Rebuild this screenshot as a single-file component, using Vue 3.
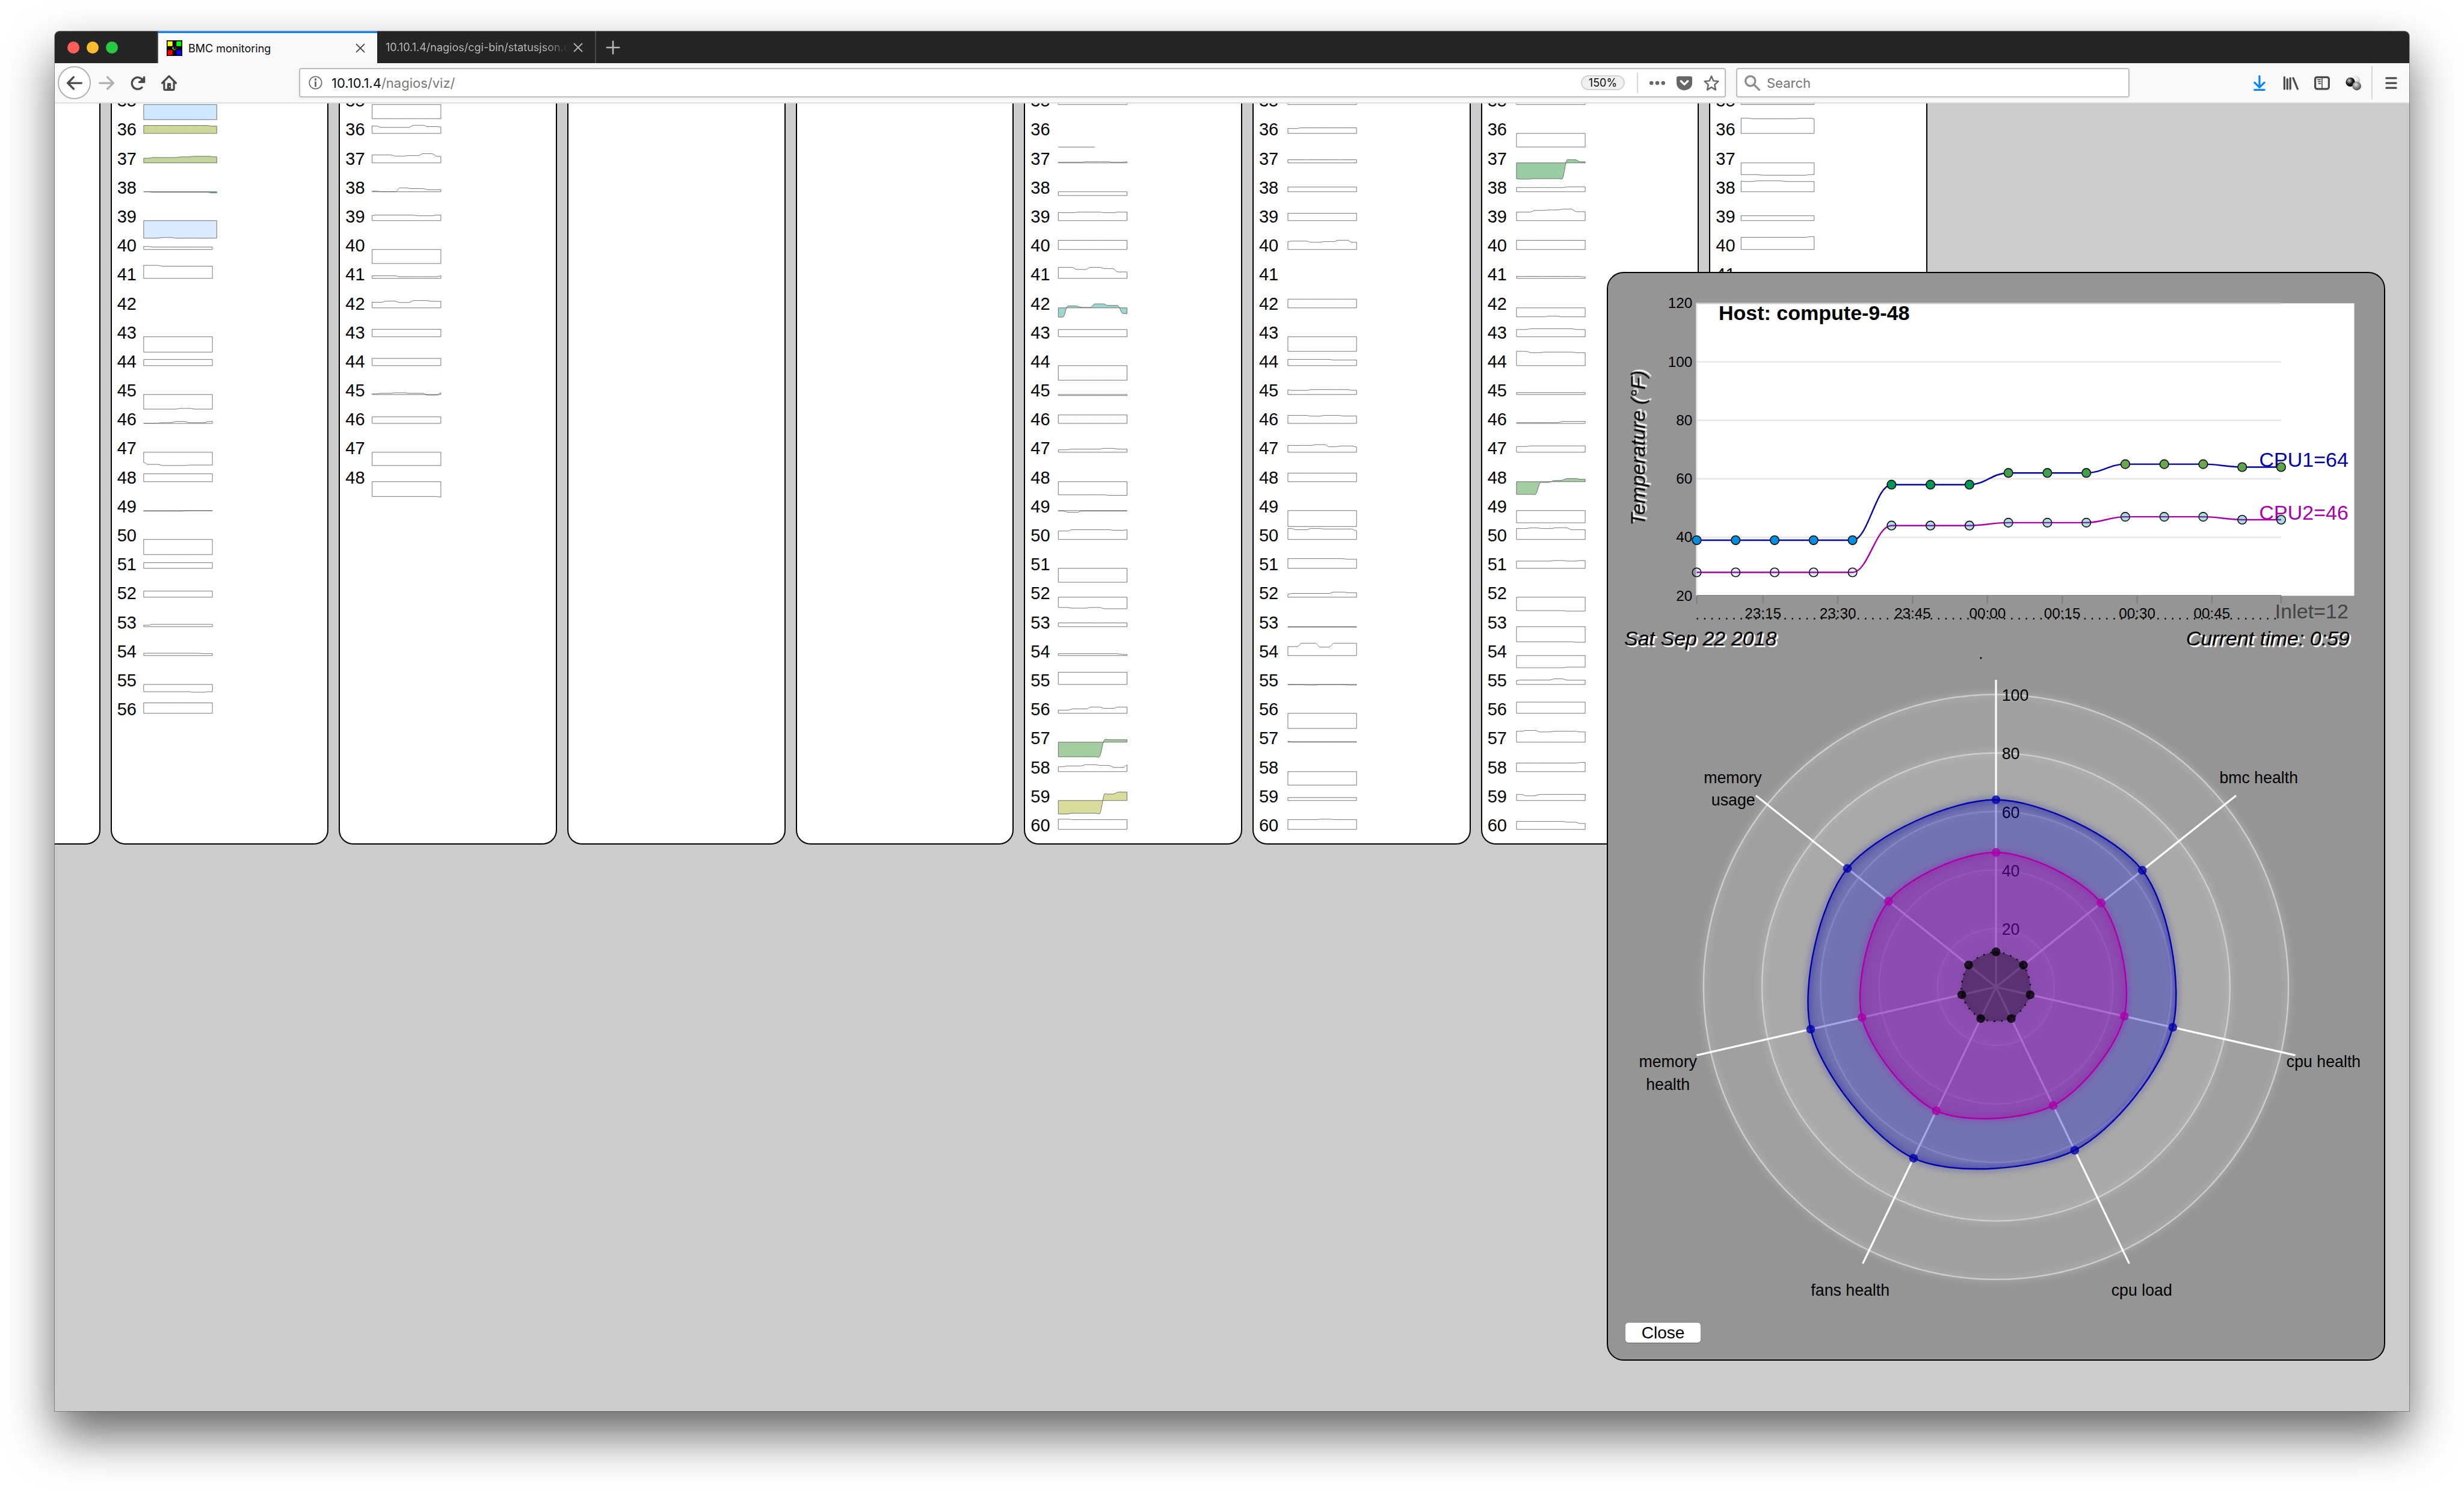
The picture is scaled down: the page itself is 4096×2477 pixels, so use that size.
<script setup>
// Each rack lists its hosts. A trace is either a constant offset from the
// baseline or a series of plateaus written as "from-to:value".
const racks = [
  { id: 1, start: 0, span: 141, last: 0 },
  {
    id: 2, start: 6, span: 141, last: 56,
    fills: { 35: '#cfe8ff', 36: '#cdd89a', 37: '#c2d59b', 38: '#62bb9c', 39: '#dcebff' },
    spans: { 35: 150, 36: 150, 37: 150, 38: 150, 39: 150 },
    traces: {
      35: -31, 36: '0-130:16.3 141-150:15', 37: '0-8:9.6 20-64:11 78-92:12.4 104-135:13.6 143-150:12.4',
      38: '0-10:0 20-130:-1 141-150:-2.4', 39: '0-29:-36 38-56:-34.6 66-150:-36', 40: '0-10:6.2 20:5',
      41: '0-29:26.8 38:25', 43: -31.5, 44: 12.5, 45: '0-66:-30 76-95:-28.6 104:-30',
      46: '0-26:0.3 38-55:1.2 67-84:4 94-124:1.2 133:4', 47: '0:-21 9-29:-25 40-83:-27.3 95:-26.3',
      48: 16.2, 49: '0-78:-1.3 88:-0.4', 50: -31, 51: 11.5, 52: 12.5, 53: '0-9:3.1 20:4.7', 54: '0-112:4.7 123:4',
      55: '0-92:-15 103-123:-16 132:-15', 56: 21.4,
    },
  },
  {
    id: 3, start: 7, span: 141, last: 48,
    traces: {
      35: -29, 36: '0-8:15.3 19-75:12.4 85-105:16.7 114-134:13.9 141:13',
      37: '0-37:16.3 49-65:13.9 73-95:15 104-122:18.9 133:13.4', 38: '0-8:1.4 19-48:0.2 57-68:8 82-104:6.5 115:4',
      39: '0:10.5 8-82:11.5 94-122:10 133:11.5', 40: -28.7, 41: '0-46:5.3 57-133:3.5 141:5.3',
      42: '0-19:11.5 29-46:13.9 56-75:11 86-111:15 122:13.4', 43: 15.3, 44: 14.8,
      45: '0-8:1.2 19-37:2.4 48-65:3.6 76-104:2.4 114-133:-1.4 141:3.3', 46: 13.4, 47: -27.3, 48: '0-130:-30.3 141:-31.4',
    },
  },
  { id: 4, start: 8, span: 141, last: 0 },
  { id: 5, start: 8, span: 141, last: 0 },
  {
    id: 6, start: 9, span: 141, last: 60,
    fills: { 42: '#9dd6cf', 57: '#a4cea2', 59: '#d9dd9c' },
    lines: { 36: { length: 75, level: -28 } },
    traces: {
      35: '0-15:6 25-35:4.6 45:6', 37: '0-46:1.3 56-102:2.5 112-133:1.3 141:2.5', 38: -7.7,
      39: '0:17 8-31:16.3 41-84:17.6 94-112:16.3 122:17.6', 40: 18.9, 41: '0-28:22.7 38-56:18.4 66-84:22.7 96-112:20 122:13.3',
      42: '0-9:-19 20-36:4 48-66:1 75-92:8.2 102-121:5 133:-11.7', 43: 14.8, 44: -30, 45: -2.3, 46: 17.3,
      47: '0-16:5 28-84:6.4 94-113:8 122:6.4', 48: '0-94:-27 105:-28', 49: '0-10:-1 21-38:-3.6 48:-1',
      50: '0-19:17.3 28-105:20 113-133:18.9 141:20', 51: -28.6, 52: '0-19:-21 28-56:-22.5 66-84:-21 95:-23.7', 53: 7.7,
      54: '0-120:3.8 133:2.3', 55: 25, 56: '0-19:6.4 30-57:9 67-84:12.8 95-113:10.2 122:12.8',
      57: '0-76:-30 83:-31 96:5.8 104:5', 58: '0-8:10 18-46:11.7 57-74:14.3 86-103:12.8 115-133:8.7 141:13.8',
      59: '0-18:-27.6 28-77:-26.3 84:-27.5 96:14.3 100-113:13.3 123:17.3', 60: '0-20:21 30:20',
    },
  },
  {
    id: 7, start: 11, span: 141, last: 60,
    traces: {
      35: 20, 36: '0-17:10 28:11.5', 37: 6.4, 38: 9.7, 39: 15, 40: '0:16.3 8-38:17.3 48-65:14.8 76-94:16.3 104-122:19 132:14.8',
      42: 17.9, 43: -30, 44: '0-84:12.8 94:11.5', 45: '0:9.7 8-38:8.4 48-122:10 132:8.7', 46: '0-38:16.3 48-65:14.8 76-104:16.3 114:15',
      47: '0-48:14 58-75:15.6 85-94:11.2 112-132:12.8 141:10.7', 48: 17.6, 49: -32.7,
      50: '0-7:22.4 17-38:20 48-65:22.4 75-130:21.4 141:17.9', 51: '0-112:20 122:18.6', 52: '0:6.1 8-84:7.7 94-114:10.5 124:9.2',
      53: -1, 54: '0-19:18.4 29-56:25.3 67-84:17.3 95:25.3', 55: '0-28:-0.5 38-56:-1.3 66-112:-0.3 124:-1.3', 56: -31,
      57: '0:2 8:1', 58: -27.6, 59: 6, 60: '0-58:20 68-86:21 95:20',
    },
  },
  {
    id: 8, start: 11, span: 141, last: 60,
    fills: { 37: '#9acda3', 48: '#a4cea2' },
    traces: {
      35: 20, 36: -27.8, 37: '0:-32.4 8-24:-33.4 34-87:-32.4 93:-33 105:7 121:6.4 131:2.3', 38: '0-94:8.7 106:10',
      39: '0-27:17.6 39-55:21 69-83:22 97-112:23.7 123:18.4', 40: 18.9, 41: '0-129:4 141:3', 42: '0-55:-18.4 67-83:-17 94:-18.4',
      43: '0-18:14.8 30-114:16.3 123:14.8', 44: '0-18:29.3 32-46:26.5 59-114:27.8 123:26.5', 45: 3.8, 46: '0-83:1.3 95:4',
      47: '0-18:11.7 30:13', 48: '0-32:-26 38:-26.5 50-65:-1.5 79-90:2.5 105-122:6.6 131:5', 49: -25,
      50: '0-18:22.4 30-41:23.7 55-69:22.4 83-102:24 114:20', 51: '0-67:14.8 80-93:16 107-121:14.8 131:16', 52: '0-94:-27.6 105:-28.6',
      53: '0-114:-31 123:-32', 54: '0-94:-25 105:-23.7', 55: '0:7.7 8-67:9 79-93:11.5 106:8.7', 56: 23,
      57: '0-10:22.4 20-38:24 49-65:21 80-122:22.4 131:21', 58: '0-121:17.6 133:19', 59: '0-10:12.5 20-34:9.7 50:12.5',
      60: '0-94:16.3 105-121:14.8 131:12.2',
    },
  },
  {
    id: 9, start: 4, span: 150, last: 41,
    traces: {
      35: 2.5, 36: '0-12:31.4 27-110:30 123-144:31 150:30', 37: '0-29:-24 47-131:-25.3 142:-24',
      38: '0:22 8-22:21 36-79:22.4 95:21', 39: 10, 40: '0-131:25 142:26.3',
    },
  },
]
const firstHost = 35

function smooth(points) {
  return points.slice(1).reduce((d, [x, y], i) => {
    const [px, py] = points[i]
    const c = (x - px) * 0.4
    return `${d}C${px + c},${py} ${x - c},${y} ${x},${y}`
  }, '')
}

function areaPath(trace, start, span) {
  const points = []
  if (typeof trace === 'number') points.push([start, -trace])
  else {
    for (const [, from, to, level] of trace.matchAll(/(\d+)(?:-(\d+))?:(-?[\d.]+)/g)) {
      points.push([start + +from, -level])
      if (to) points.push([start + +to, -level])
    }
  }
  points.push([start + span, points[points.length - 1][1]])
  return `M${start},0L${points[0].join(',')}${smooth(points)}L${start + span},0Z`
}

const columns = racks.map((rack) => {
  const hosts = []
  for (let n = firstHost; n <= rack.last; n++) {
    const trace = rack.traces[n]
    const line = rack.lines?.[n]
    hosts.push({
      n,
      fill: rack.fills?.[n] ?? '#fff',
      area: trace === undefined ? '' : areaPath(trace, rack.start, rack.spans?.[n] ?? rack.span),
      line: line ? `M${rack.start},${-line.level}h${line.length}` : '',
    })
  }
  return { id: rack.id, hosts }
})

// Line chart
const plot = { left: 182, top: 62, right: 1381, edge: 1531, bottom: 662 }
const px = (i) => plot.left + (i * (plot.right - plot.left)) / 15
const py = (v) => plot.top + (120 - v) * 6
const yTicks = [120, 100, 80, 60, 40, 20]
const xTicks = ['23:15', '23:30', '23:45', '00:00', '00:15', '00:30', '00:45'].map((label, i) => ({ label, x: 318 + i * 153.5 }))
const tones = { 39: '#008fe0', 58: '#00965a', 62: '#3fa050', 65: '#6aa84f', 64: '#5ca54c', 28: '#4696ff22', 44: '#008caa48', 45: '#008caa4c', 46: '#008caa50', 47: '#0091a054' }
const series = [
  { name: 'CPU1', color: '#0000a8', values: [39, 39, 39, 39, 39, 58, 58, 58, 62, 62, 62, 65, 65, 65, 64, 64] },
  { name: 'CPU2', color: '#a800a8', values: [28, 28, 28, 28, 28, 44, 44, 44, 45, 45, 45, 47, 47, 47, 46, 46] },
].map((s) => {
  const points = s.values.map((v, i) => [px(i), py(v)])
  const last = s.values[15]
  return { ...s, last, points, d: `M${points[0].join(',')}${smooth(points)}` }
})

// Radar chart
const cx = 796
const cy = 692
const polar = (i, v) => {
  const a = (i * 2 * Math.PI) / 7 - Math.PI / 2
  return [cx + Math.cos(a) * v * 6, cy + Math.sin(a) * v * 6]
}
const axes = [0, 1, 2, 3, 4, 5, 6].map((i) => polar(i, 105))
const blobs = [
  { color: '#0000a8', fill: '#0000b8', values: [64, 64, 62, 62, 65, 65, 65] },
  { color: '#a800a8', fill: '#b400a8', values: [46, 46, 45, 45, 47, 47, 47] },
  { color: '#000000', fill: '#000000', values: [12, 12, 12, 12, 12, 12, 12], dash: '3 12' },
].map((b) => {
  const pts = b.values.map((v, i) => polar(i, v))
  const at = (i) => pts[(i + 7) % 7]
  let d = `M${pts[0].join(',')}`
  for (let i = 0; i < 7; i++) {
    const [a, p, q, z] = [at(i - 1), at(i), at(i + 1), at(i + 2)]
    const k = 0.15
    d += `C${p[0] + k * (q[0] - a[0])},${p[1] + k * (q[1] - a[1])} ${q[0] - k * (z[0] - p[0])},${q[1] - k * (z[1] - p[1])} ${q[0]},${q[1]}`
  }
  return { ...b, pts, d: d + 'Z' }
})
const axisLabels = [
  { text: 'bmc health', x: 1335, y: 274 },
  { text: 'cpu health', x: 1468, y: 857 },
  { text: 'cpu load', x: 1095, y: 1325 },
  { text: 'fans health', x: 497, y: 1325 },
  { text: 'memory', x: 123, y: 857 },
  { text: 'health', x: 123, y: 903 },
  { text: 'memory', x: 256, y: 274 },
  { text: 'usage', x: 257, y: 320 },
]
</script>

<template>
  <div class="desktop">
    <div class="window">
      <header class="tabs">
        <div class="lights"><i class="red"></i><i class="amber"></i><i class="green"></i></div>
        <div class="tab active">
          <svg class="favicon" viewBox="0 0 32 32">
            <path fill="#000" d="M0 0h32v32H0z" /><path fill="#ff0" d="M2 2h10v10H2zM12 14h2v4h-2z" />
            <path fill="#0f0" d="M20 2h10v10H20zM14 18h4v2h-4z" /><path fill="red" d="M2 20h10v10H2zM18 14h2v4h-2z" />
            <path fill="#1400ff" d="M20 20h10v10H20zM14 12h4v2h-4z" />
          </svg>
          <span class="tab-title">BMC monitoring</span>
          <button class="close-tab" aria-label="Close tab"><svg viewBox="0 0 20 20"><path d="M2 2l16 16M18 2L2 18" /></svg></button>
        </div>
        <div class="tab second">
          <span class="tab-title">10.10.1.4/nagios/cgi-bin/statusjson.c</span>
          <button class="close-tab" aria-label="Close tab"><svg viewBox="0 0 20 20"><path d="M2 2l16 16M18 2L2 18" /></svg></button>
        </div>
        <button class="new-tab" aria-label="New tab"><svg viewBox="0 0 28 28"><path d="M14 2v24M2 14h24" /></svg></button>
      </header>

      <nav class="toolbar">
        <button class="back" aria-label="Back"><svg viewBox="0 0 32 32"><path d="M30 16H3M14 4L2 16l12 12" /></svg></button>
        <button class="tool faded" aria-label="Forward"><svg viewBox="0 0 32 32"><path d="M2 16h27M18 4l12 12-12 12" /></svg></button>
        <button class="tool" aria-label="Reload"><svg viewBox="0 0 32 32"><path d="M24.500 25A12 12 0 1 1 26 10" /><path d="M19 14h10V4" /><path fill="currentColor" d="M29 6v8h-8z" /></svg></button>
        <button class="tool" aria-label="Home"><svg viewBox="0 0 32 32"><path d="M2 16L16 2l14 14" /><path d="M6 15v13q0 2 2 2h16q2 0 2-2V15" /><path fill="currentColor" stroke="none" d="M12 30V18q0-2 2-2h4q2 0 2 2v12z" /><path fill="#f9f9fa" stroke="none" d="M16 22h2v2h-2z" /></svg></button>
        <span class="spring"></span>
        <div class="address">
          <svg class="info" viewBox="0 0 28 28"><circle cx="14" cy="14" r="12.500" /><path d="M14 13v8" stroke-width="3.500" /><path d="M14 7v1" stroke-width="4" /></svg>
          <a class="url" href="#">10.10.1.4<span>/nagios/viz/</span></a>
          <button class="zoom">150%</button>
          <span class="rule"></span>
          <button class="action" aria-label="Page actions"><svg viewBox="0 0 32 32"><g fill="currentColor" stroke="none"><circle cx="4" cy="16" r="4" /><circle cx="16" cy="16" r="4" /><circle cx="28" cy="16" r="4" /></g></svg></button>
          <button class="action" aria-label="Save to Pocket"><svg viewBox="0 0 32 32"><path fill="currentColor" stroke="none" d="M4 2h24q4 0 4 4v9q0 8-5 12-5 4-11 4T5 27Q0 23 0 15V6q0-4 4-4z" /><path stroke="#fff" d="M9 12l7 7 7-7" /></svg></button>
          <button class="action" aria-label="Bookmark"><svg viewBox="0 0 32 32"><path stroke-width="3" d="M16 2l4 9.500 10 1-7.500 7L24.500 30 16 24.500 7.500 30l2-10.500L2 12.500l10-1z" /></svg></button>
        </div>
        <label class="search">
          <svg viewBox="0 0 32 32"><circle cx="12" cy="12" r="10" /><path d="M20 20l10 10" /></svg>
          <input type="text" placeholder="Search" aria-label="Search" />
        </label>
        <span class="spring"></span>
        <button class="tool download" aria-label="Downloads"><svg viewBox="0 0 32 32"><path d="M16 2v23M6 15l10 10 10-10M6 30h20" /></svg></button>
        <button class="tool" aria-label="Library"><svg viewBox="0 0 32 32"><path d="M3 4v24M9 8v20M15 6v22M21 6l9 22" /></svg></button>
        <button class="tool" aria-label="Sidebar"><svg viewBox="0 0 32 32"><rect x="2" y="4" width="28" height="24" rx="4" /><path stroke-width="2" d="M16 4v24M7 9h6M8 13h5M9 17h4" /></svg></button>
        <button class="tool" aria-label="Extension">
          <svg viewBox="0 0 32 32">
            <defs>
              <radialGradient id="light" cx=".4" cy=".35" r=".7"><stop offset="0" stop-color="#fff" /><stop offset="1" stop-color="#c4c4c4" /></radialGradient>
              <radialGradient id="dark" cx=".38" cy=".35" r=".6"><stop offset="0" stop-color="#d0d0d0" /><stop offset=".6" stop-color="#222" /><stop offset="1" stop-color="#000" /></radialGradient>
              <radialGradient id="mid" cx=".4" cy=".35" r=".65"><stop offset="0" stop-color="#ddd" /><stop offset="1" stop-color="#4a4a4a" /></radialGradient>
            </defs>
            <g stroke="none"><circle cx="21" cy="10" r="9" fill="url(#light)" /><circle cx="10" cy="14" r="9.500" fill="url(#dark)" /><circle cx="23" cy="22" r="9" fill="url(#mid)" /></g>
          </svg>
        </button>
        <span class="rule tall"></span>
        <button class="tool" aria-label="Menu"><svg viewBox="0 0 32 32"><path d="M6 6h20M6 16h20M6 26h20" /></svg></button>
      </nav>

      <main class="page">
        <div class="racks">
          <ol v-for="rack in columns" :key="rack.id" class="rack">
            <li v-for="host in rack.hosts" :key="host.n">
              <span class="number">{{ host.n }}</span>
              <svg class="trace" viewBox="0 -49 200 59">
                <path v-if="host.area" :d="host.area" :fill="host.fill" />
                <path v-if="host.line" :d="host.line" fill="none" />
              </svg>
            </li>
          </ol>
        </div>

        <section class="panel">
          <svg class="chart" viewBox="0 0 1592 726">
            <rect :x="plot.left" :y="plot.top" :width="plot.edge - plot.left" :height="plot.bottom - plot.top" fill="#fff" />
            <g stroke="#e6e6e6" stroke-width="3">
              <path v-for="v in yTicks" :key="v" :d="`M${plot.left},${py(v)}H${plot.right}`" :stroke="v === 120 ? '#c8c8c8' : null" />
              <path :d="`M${plot.left},${plot.top}V${plot.bottom}`" />
            </g>
            <g stroke="#808080" stroke-width="3">
              <path :d="`M${plot.left},${plot.bottom}H${plot.right}M${plot.left},${plot.bottom}v16M${plot.right},${plot.bottom}v16`" />
              <path v-for="t in xTicks" :key="t.label" :d="`M${t.x},${plot.bottom}v16`" />
            </g>
            <g class="ticks">
              <text v-for="v in yTicks" :key="v" x="173" :y="py(v) + 10" text-anchor="end">{{ v }}</text>
              <text v-for="t in xTicks" :key="t.label" :x="t.x" y="709" text-anchor="middle">{{ t.label }}</text>
            </g>
            <path d="M182,709H1381" stroke="#000" stroke-width="3" stroke-dasharray="3 12" />
            <text class="host" x="227" y="96">Host: compute-9-48</text>
            <text class="axis-name" transform="translate(76 518) rotate(-90)">Temperature (°F)</text>
            <g v-for="s in series" :key="s.name">
              <path :d="s.d" fill="none" :stroke="s.color" stroke-width="3" />
              <text class="value" x="1519" :y="py(s.last)" :fill="s.color">{{ s.name }}={{ s.last }}</text>
              <circle v-for="(p, i) in s.points" :key="i" :cx="p[0]" :cy="p[1]" r="9" :fill="tones[s.values[i]]" stroke="#111" stroke-width="2" />
            </g>
            <text class="value" x="1519" y="708" fill="#444">Inlet=12</text>
          </svg>

          <div class="dates"><span>Sat Sep 22 2018</span><span>Current time: 0:59</span></div>

          <svg class="radar" viewBox="0 0 1592 1363">
            <defs>
              <filter id="glow"><feGaussianBlur stdDeviation="7.500" result="soft" /><feMerge><feMergeNode in="soft" /><feMergeNode in="SourceGraphic" /></feMerge></filter>
            </defs>
            <circle cx="765" cy="17" r="2" />
            <g fill="#cdcdcd" fill-opacity=".1" stroke="#cdcdcd" stroke-width="3">
              <circle v-for="r in [100, 80, 60, 40, 20]" :key="r" :cx="cx" :cy="cy" :r="r * 6" filter="url(#glow)" />
            </g>
            <text v-for="r in [100, 80, 60, 40, 20]" :key="r" x="808" :y="cy - r * 6 + 13">{{ r }}</text>
            <path v-for="(a, i) in axes" :key="i" :d="`M${cx},${cy}L${a.join(',')}`" stroke="#fff" stroke-width="4" />
            <text v-for="l in axisLabels" :key="l.text + l.x + l.y" :x="l.x" :y="l.y" text-anchor="middle">{{ l.text }}</text>
            <g v-for="b in blobs" :key="b.color">
              <path :d="b.d" :fill="b.fill" fill-opacity=".35" />
              <path :d="b.d" fill="none" :stroke="b.color" stroke-width="3" :stroke-dasharray="b.dash" filter="url(#glow)" />
              <circle v-for="(p, i) in b.pts" :key="i" :cx="p[0]" :cy="p[1]" r="9" :fill="b.color" fill-opacity=".8" />
            </g>
          </svg>

          <button class="close">Close</button>
        </section>
      </main>
    </div>
  </div>
</template>

<style>
body {
  margin: 0;
  background: #fff;
}
</style>

<style scoped>
.desktop {
  box-sizing: border-box;
  height: 100vh;
  padding: 52px 91px 131px;
  overflow: hidden;
  font-family: Inter, "Liberation Sans", sans-serif;
}
.window {
  display: flex;
  flex-direction: column;
  height: 100%;
  overflow: hidden;
  border-radius: 8px 8px 0 0;
  background: #ccc;
  box-shadow: 0 0 0 1px rgba(0, 0, 0, 0.3), 0 40px 80px rgba(0, 0, 0, 0.6);
}
button {
  margin: 0;
  padding: 0;
  border: 0;
  background: none;
  color: inherit;
  font: inherit;
}
svg {
  display: block;
}

.tabs {
  display: flex;
  flex: none;
  height: 53px;
  background: #252525;
  color: #b8b8b8;
}
.lights {
  display: flex;
  align-items: center;
  gap: 12px;
  box-sizing: border-box;
  width: 172px;
  padding-left: 21px;
  border-right: 2px solid #4a4a4a;
}
.lights i {
  width: 20px;
  height: 20px;
  border-radius: 50%;
}
.red { background: #ff5f58; }
.amber { background: #ffbd2e; }
.green { background: #28ca42; }
.tab {
  display: flex;
  align-items: center;
  gap: 10px;
  box-sizing: border-box;
  width: 364px;
  padding: 0 20px 0 14px;
  font-size: 18px;
}
.active {
  border-top: 3px solid #0a84ff;
  background: #f9f9fa;
  color: #0c0c0d;
}
.second {
  border-right: 2px solid #4a4a4a;
  gap: 4px;
}
.favicon {
  width: 26px;
  height: 26px;
}
.tab-title {
  flex: 1;
  overflow: hidden;
  white-space: nowrap;
}
.second .tab-title {
  mask-image: linear-gradient(to right, #000 86%, transparent 99%);
}
.close-tab svg {
  width: 16px;
  height: 16px;
}
.tabs button svg {
  fill: none;
  stroke: currentColor;
  stroke-width: 2.5;
  stroke-linecap: round;
}
.active button { color: #4a4a4b; }
.new-tab {
  padding: 0 16px;
}
.tabs .new-tab svg {
  width: 24px;
  height: 24px;
  stroke-width: 3;
}

.toolbar {
  display: flex;
  flex: none;
  align-items: center;
  box-sizing: border-box;
  height: 67px;
  padding: 0 4px 0 5px;
  border-bottom: 2px solid #e0e0e1;
  background: #f9f9fa;
  color: #4a4a4b;
}
.toolbar svg {
  width: 26px;
  height: 26px;
  fill: none;
  stroke: currentColor;
  stroke-width: 4;
  stroke-linecap: round;
  stroke-linejoin: round;
}
.back {
  display: grid;
  place-items: center;
  box-sizing: border-box;
  width: 55px;
  height: 55px;
  border: 2px solid #b1b1b2;
  border-radius: 50%;
  background: #fff;
}
.tool {
  display: grid;
  place-items: center;
  width: 52px;
  height: 52px;
}
.faded { color: #b1b1b2; }
.download { color: #0a84ff; }
.spring {
  width: 190px;
}
.address,
.search {
  display: flex;
  align-items: center;
  box-sizing: border-box;
  height: 49px;
  border: 2px solid #bdbdbe;
  border-radius: 4px;
  background: #fff;
  box-shadow: 0 2px 5px rgba(0, 0, 0, 0.05);
  font-size: 22px;
}
.address {
  flex: 1;
  padding-left: 14px;
  color: #666;
}
.toolbar .info {
  width: 23px;
  height: 23px;
  stroke-width: 2;
}
.url {
  flex: 1;
  padding-left: 15px;
  color: #0c0c0d;
  text-decoration: none;
}
.url span {
  color: #777;
}
.zoom {
  width: 73px;
  height: 25px;
  border: 2px solid #d2d2d3;
  border-radius: 13px;
  background: #f0f0f0;
  color: #0c0c0d;
  font-size: 18px;
  line-height: 20px;
}
.rule {
  width: 2px;
  height: 34px;
  margin: 0 9px 0 20px;
  background: #d7d7db;
}
.tall {
  height: 55px;
  margin: 0 5px 0 4px;
}
.action {
  display: grid;
  place-items: center;
  width: 45px;
  height: 45px;
}
.search {
  width: 654px;
  margin-left: 17px;
  padding-left: 12px;
  color: #8c8c8c;
}
.search input {
  flex: 1;
  padding: 0 0 0 11px;
  border: 0;
  outline: 0;
  background: none;
  font: inherit;
}
.search input::placeholder {
  color: #757575;
  opacity: 1;
}

.page {
  position: relative;
  flex: 1;
  overflow: hidden;
  color: #000;
  font-family: "Liberation Sans", Arial, sans-serif;
}
.racks {
  display: grid;
  grid-template-columns: repeat(9, 1fr);
  gap: 17px;
  height: 1270px;
  margin: -38px 801px 0 -287px;
}
.rack {
  display: grid;
  grid-template-rows: repeat(26, 1fr);
  box-sizing: border-box;
  margin: 0;
  padding: 0 0 15px 9px;
  border: solid #000;
  border-width: 0 2px 2px;
  border-radius: 0 0 24px 24px;
  background: #fff;
  list-style: none;
}
.rack li {
  display: flex;
  align-items: flex-end;
  min-height: 0;
}
.number {
  width: 39px;
  font-size: 29px;
  line-height: 30px;
}
.trace {
  width: 162px;
  height: 48px;
  overflow: visible;
  stroke: #555;
  stroke-width: 1;
}

.panel {
  position: absolute;
  top: 280px;
  right: 40px;
  box-sizing: border-box;
  width: 1294px;
  padding-bottom: 28px;
  border: 2px solid #000;
  border-radius: 28px;
  background: #959595;
}
.chart,
.radar {
  width: 100%;
}
.ticks {
  font-size: 30px;
}
.host {
  font-size: 42px;
  font-weight: bold;
}
.axis-name {
  font-size: 42px;
  font-style: italic;
  filter: drop-shadow(4px 4px 0 #fff);
}
.value {
  font-size: 42px;
  text-anchor: end;
}
.dates {
  display: flex;
  justify-content: space-between;
  padding: 0 57px 0 27px;
  font-size: 34px;
  font-style: italic;
  line-height: 38px;
  text-shadow: 3px 3px 0 #fff;
}
.radar {
  font-size: 33px;
}
.close {
  display: block;
  width: 125px;
  height: 33px;
  margin: 14px 0 0 29px;
  border-radius: 5px;
  background: #fff;
  box-shadow: 0 1px 1px rgba(0, 0, 0, 0.3);
  font-size: 28px;
  line-height: 33px;
}
</style>
